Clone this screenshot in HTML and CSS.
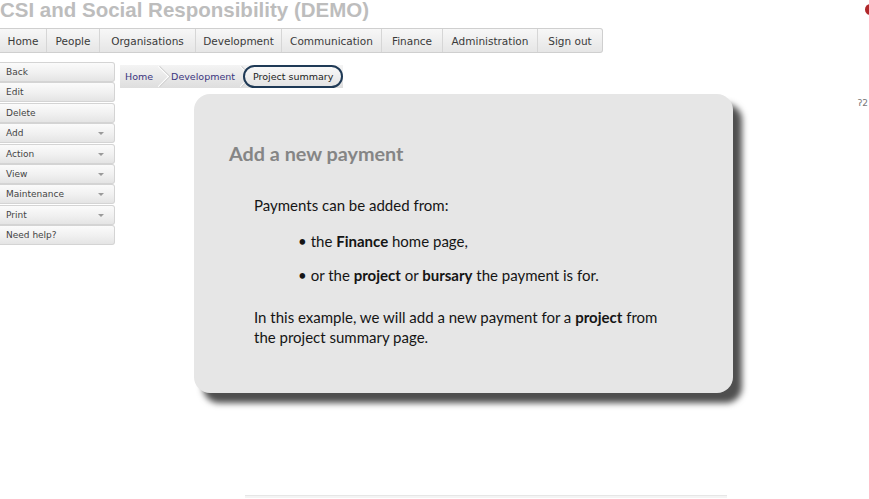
FILE: index.html
```html
<!DOCTYPE html>
<html lang="en">
<head>
<meta charset="utf-8">
<title>CSI and Social Responsibility (DEMO)</title>
<link rel="stylesheet" href="styles.css">
</head>
<body>
<header class="topbar">
  <h1 class="site-title">CSI and Social Responsibility (DEMO)</h1>
  <span class="alert-dot"></span>
</header>
<nav class="mainnav">
  <a class="nav-item">Home</a>
  <a class="nav-item">People</a>
  <a class="nav-item">Organisations</a>
  <a class="nav-item">Development</a>
  <a class="nav-item">Communication</a>
  <a class="nav-item">Finance</a>
  <a class="nav-item">Administration</a>
  <a class="nav-item">Sign out</a>
</nav>
<div class="layout">
  <aside class="sidemenu">
    <a class="side-btn">Back</a>
    <a class="side-btn">Edit</a>
    <a class="side-btn">Delete</a>
    <a class="side-btn has-drop">Add</a>
    <a class="side-btn has-drop">Action</a>
    <a class="side-btn has-drop">View</a>
    <a class="side-btn has-drop">Maintenance</a>
    <a class="side-btn has-drop">Print</a>
    <a class="side-btn">Need help?</a>
  </aside>
  <main class="content">
    <div class="crumbs">
      <a class="crumb">Home</a>
      <a class="crumb">Development</a>
      <a class="crumb crumb-current">Project summary</a>
    </div>
    <section class="slide">
      <h2 class="slide-title">Add a new payment</h2>
      <p class="slide-text">Payments can be added from:</p>
      <ul class="slide-list">
        <li>the <b>Finance</b> home page,</li>
        <li>or the <b>project</b> or <b>bursary</b> the payment is for.</li>
      </ul>
      <p class="slide-text">In this example, we will add a new payment for a <b>project</b> from the project summary page.</p>
    </section>
    <div class="footer-rule"></div>
  </main>
  <span class="stray">ʔ2</span>
</div>
</body>
</html>
```
FILE: styles.css
```css
html, body {
  margin: 0;
  padding: 0;
}
body {
  font-family: "DejaVu Sans", Verdana, sans-serif;
  background: #fff;
  color: #333;
  overflow: hidden;
  height: 499px;
}
.topbar {
  position: relative;
  height: 29px;
}
.site-title {
  margin: 0;
  margin-top: -1px;
  font: bold 20.5px/22px "Liberation Sans", Arial, sans-serif;
  color: #bdbdbd;
  white-space: nowrap;
}
.alert-dot {
  position: absolute;
  right: -7px;
  top: 5px;
  width: 11px;
  height: 11px;
  border-radius: 50%;
  background: #b0272a;
}
.mainnav {
  display: flex;
  width: 602px;
  height: 23px;
  border: 1px solid #cfcfcf;
  border-left: none;
  border-radius: 0 3px 3px 0;
  background: linear-gradient(#f7f7f7, #e6e6e6);
}
.nav-item {
  display: flex;
  align-items: center;
  justify-content: center;
  padding-top: 1px;
  font-size: 10.5px;
  color: #3a3a3a;
  border-right: 1px solid #d6d6d6;
}
.nav-item:last-child { border-right: none; }
.nav-item:nth-child(1) { width: 46px; }
.nav-item:nth-child(2) { width: 52px; }
.nav-item:nth-child(3) { width: 95px; }
.nav-item:nth-child(4) { width: 85px; }
.nav-item:nth-child(5) { width: 99px; }
.nav-item:nth-child(6) { width: 60px; }
.nav-item:nth-child(7) { width: 94px; }
.nav-item:nth-child(8) { flex: 1; }

.layout {
  position: relative;
  display: flex;
  gap: 5px;
  margin-top: 9px;
}
.sidemenu {
  display: flex;
  flex-direction: column;
  width: 115px;
  flex: none;
}
.side-btn {
  position: relative;
  display: flex;
  align-items: center;
  height: 18px;
  padding-left: 6px;
  margin-bottom: 0.4px;
  font-size: 9px;
  color: #444;
  border: 1px solid #d4d4d4;
  border-left: none;
  border-radius: 0 3px 3px 0;
  background: linear-gradient(#fbfbfb, #f0f0f0 55%, #e4e4e4);
}
.side-btn.has-drop::after {
  content: "";
  position: absolute;
  right: 10px;
  top: 8px;
  border-left: 3px solid transparent;
  border-right: 3px solid transparent;
  border-top: 3px solid #9a9a9a;
}

.content {
  display: flex;
  flex-direction: column;
  align-items: flex-start;
  flex: 1;
  padding-top: 3px;
}
.crumbs {
  display: flex;
  align-items: stretch;
  height: 23px;
  background: linear-gradient(#f4f4f4, #dedede);
}
.crumb {
  position: relative;
  display: flex;
  align-items: center;
  font-size: 9.5px;
  color: #3b3580;
  padding: 0 10px 0 5px;
}
.crumb + .crumb { padding-left: 8px; }
.crumb:not(.crumb-current)::after {
  content: "";
  position: absolute;
  right: -3px;
  top: 4px;
  width: 14px;
  height: 14px;
  border-top: 1px solid #fff;
  border-right: 1px solid #fff;
  box-shadow: 1px -1px 0 #cfcfcf;
  transform: rotate(45deg);
}
.crumb-current {
  margin-left: -2px;
  padding: 0 8px 0 7px;
  color: #222;
  border: 2px solid #1f3a56;
  border-radius: 12px;
  background: linear-gradient(#f8f8f8, #e4e4e4);
}

.slide {
  margin: 6px 0 0 74px;
  width: 539px;
  height: 299px;
  box-sizing: border-box;
  padding: 47px 64px 0 35px;
  background: #e6e6e6;
  border-radius: 16px;
  box-shadow: 9px 10px 6px #4f4f4f;
  font-family: Lato, "Open Sans", sans-serif;
  color: #151515;
}
.slide-title {
  margin: 0 0 30px;
  font-size: 19.8px;
  line-height: 24px;
  font-weight: bold;
  color: #858585;
}
.slide-text {
  margin: 0 0 0 25px;
  font-size: 15px;
  line-height: 20px;
}
.slide-list {
  margin: 16px 0 22px;
  padding: 0 0 0 69px;
  list-style: none;
  font-size: 15px;
  line-height: 20px;
}
.slide-list li {
  margin-bottom: 14px;
}
.slide-list li::before {
  content: "•";
  margin-right: 4px;
}
.slide-list li:last-child { margin-bottom: 0; }

.footer-rule {
  margin: 102px 0 0 125px;
  width: 482px;
  height: 2px;
  border-top: 1px solid #e6e6e6;
  background: #f4f4f4;
}
.stray {
  position: absolute;
  right: 1px;
  top: 36px;
  font-size: 9px;
  color: #777;
}
```
